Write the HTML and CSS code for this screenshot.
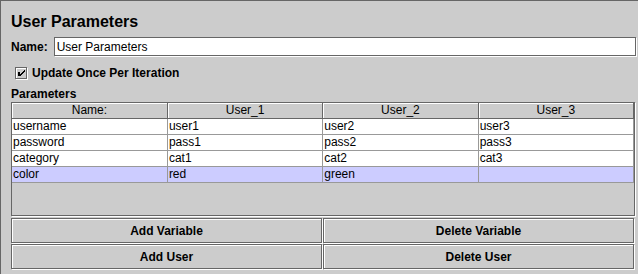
FILE: index.html
```html
<!DOCTYPE html>
<html lang="en">
<head>
    <meta charset="UTF-8">
    <title>User Parameters</title>
    <link rel="stylesheet" href="styles.css">
</head>
<body>
    <div class="panel">
        <h1 class="title">User Parameters</h1>

        <div class="name-row">
            <label class="label" for="name">Name:</label>
            <input class="field" id="name" type="text" value="User Parameters">
        </div>

        <div class="check-row">
            <span class="check-box">
                <svg width="12" height="12" viewBox="0 0 12 12" shape-rendering="crispEdges">
                    <rect x="3" y="5" width="2" height="4" fill="#000"/>
                    <rect x="5" y="7" width="1" height="2" fill="#000"/>
                    <rect x="6" y="6" width="1" height="2" fill="#000"/>
                    <rect x="7" y="5" width="1" height="2" fill="#000"/>
                    <rect x="8" y="4" width="1" height="2" fill="#000"/>
                    <rect x="9" y="3" width="1" height="2" fill="#000"/>
                </svg>
            </span>
            <span class="label">Update Once Per Iteration</span>
        </div>

        <div class="section-label">Parameters</div>

        <div class="scroll-pane">
            <table class="params">
                <thead>
                    <tr>
                        <th>Name:</th>
                        <th>User_1</th>
                        <th>User_2</th>
                        <th>User_3</th>
                    </tr>
                </thead>
                <tbody>
                    <tr>
                        <td>username</td>
                        <td>user1</td>
                        <td>user2</td>
                        <td>user3</td>
                    </tr>
                    <tr>
                        <td>password</td>
                        <td>pass1</td>
                        <td>pass2</td>
                        <td>pass3</td>
                    </tr>
                    <tr>
                        <td>category</td>
                        <td>cat1</td>
                        <td>cat2</td>
                        <td>cat3</td>
                    </tr>
                    <tr class="selected">
                        <td>color</td>
                        <td>red</td>
                        <td>green</td>
                        <td></td>
                    </tr>
                </tbody>
            </table>
        </div>

        <div class="buttons">
            <button class="btn">Add Variable</button>
            <button class="btn">Delete Variable</button>
            <button class="btn">Add User</button>
            <button class="btn">Delete User</button>
        </div>
    </div>
</body>
</html>
```

FILE: styles.css
```css
* {
    margin: 0;
    padding: 0;
    box-sizing: border-box;
}

body {
    font-family: 'Liberation Sans', Arial, sans-serif;
    font-size: 12px;
    background: #cccccc;
    color: #000;
}

.panel {
    height: 274px;
    border-top: 1px solid #666666;
    border-left: 1px solid #666666;
    padding: 0 2px 0 10px;
    display: flex;
    flex-direction: column;
}

.title {
    margin-top: 11px;
    font-size: 16px;
    line-height: 20px;
    font-weight: bold;
}

.label {
    font-weight: bold;
    line-height: 13px;
}

.name-row {
    margin-top: 5px;
    display: flex;
    align-items: center;
    gap: 6px;
    height: 20px;
}

.field {
    flex: 1;
    height: 19px;
    margin-bottom: 1px;
    border: 1px solid #666666;
    box-shadow: 1px 1px 0 #ffffff;
    background: #fff;
    padding: 1px 2px 0;
    font-family: inherit;
    font-size: 12px;
    color: #000;
    outline: none;
}

.check-row {
    margin-top: 10px;
    display: flex;
    align-items: center;
    gap: 5px;
    height: 13px;
    padding-left: 4px;
}

.check-box {
    width: 12px;
    height: 12px;
    margin-bottom: 1px;
    border: 1px solid #666666;
    box-shadow: inset 1px 1px 0 #ffffff, 1px 1px 0 #ffffff;
    position: relative;
}

.check-box svg {
    position: absolute;
    left: -1px;
    top: -1px;
}

.section-label {
    margin-top: 7px;
    font-weight: bold;
    line-height: 15px;
}

.scroll-pane {
    height: 114px;
    margin-right: 1px;
    border: 1px solid #666666;
    box-shadow: 1px 1px 0 #ffffff;
    margin-bottom: 1px;
    background: #cccccc;
}

.params {
    width: 100%;
    table-layout: fixed;
    border-collapse: collapse;
}

.params th {
    height: 15px;
    font-weight: normal;
    text-align: center;
    line-height: 13px;
    padding-top: 1px;
    border-right: 1px solid #666666;
    border-bottom: 1px solid #666666;
    box-shadow: inset 1px 1px 0 #ffffff;
    background: #cccccc;
}

.params td {
    height: 16px;
    background: #ffffff;
    text-align: left;
    line-height: 15px;
    padding: 0 1px;
    border-right: 1px solid #999999;
    border-bottom: 1px solid #999999;
    white-space: nowrap;
}

.params tr.selected td {
    background: #ccccff;
}

.buttons {
    display: grid;
    grid-template-columns: 311px 311px;
    grid-auto-rows: 25px;
    gap: 1px;
    margin-top: 1px;
}

.btn {
    font-family: inherit;
    font-size: 12px;
    font-weight: bold;
    color: #000;
    background: #cccccc;
    border: 1px solid #666666;
    box-shadow: inset 1px 1px 0 #ffffff, 1px 1px 0 #ffffff;
    padding-top: 1px;
}
```
